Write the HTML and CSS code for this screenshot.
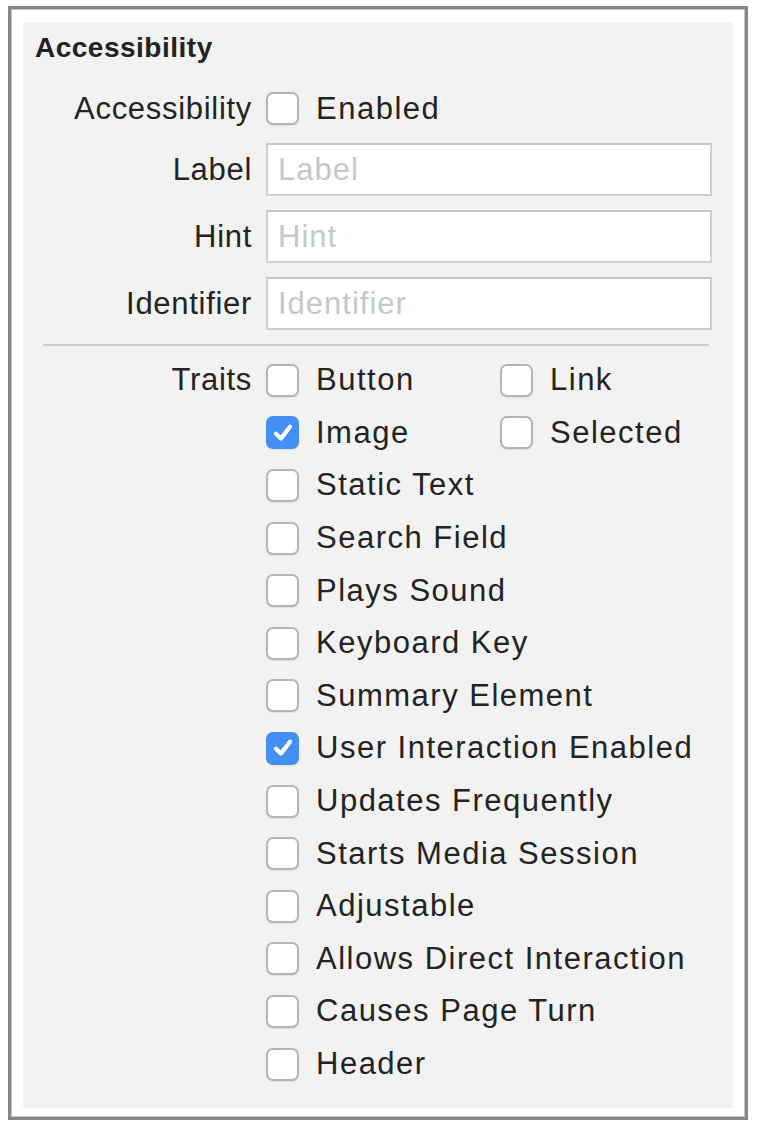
FILE: index.html
```html
<!DOCTYPE html>
<html>
<head>
<meta charset="utf-8">
<link rel="stylesheet" href="styles.css">
</head>
<body>
<div class="frame">
  <div class="panel">
    <h2 class="title">Accessibility</h2>
    <div class="form">
      <span class="lbl first">Accessibility</span>
      <label class="check first"><span class="box"></span><span class="txt">Enabled</span></label>
      <span class="lbl">Label</span>
      <div class="field">Label</div>
      <span class="lbl">Hint</span>
      <div class="field">Hint</div>
      <span class="lbl">Identifier</span>
      <div class="field">Identifier</div>
    </div>
    <div class="sep"></div>
    <div class="traits">
      <span class="lbl traits-lbl">Traits</span>
      <div class="trait-list">
        <label class="check"><span class="box"></span><span class="txt">Button</span></label>
        <label class="check"><span class="box"></span><span class="txt">Link</span></label>
        <label class="check"><span class="box on"><svg viewBox="0 0 20 20"><path d="M5 10.5 L8.5 14 L15 5.5" /></svg></span><span class="txt">Image</span></label>
        <label class="check"><span class="box"></span><span class="txt">Selected</span></label>
        <label class="check wide"><span class="box"></span><span class="txt">Static Text</span></label>
        <label class="check wide"><span class="box"></span><span class="txt">Search Field</span></label>
        <label class="check wide"><span class="box"></span><span class="txt">Plays Sound</span></label>
        <label class="check wide"><span class="box"></span><span class="txt">Keyboard Key</span></label>
        <label class="check wide"><span class="box"></span><span class="txt">Summary Element</span></label>
        <label class="check wide"><span class="box on"><svg viewBox="0 0 20 20"><path d="M5 10.5 L8.5 14 L15 5.5" /></svg></span><span class="txt">User Interaction Enabled</span></label>
        <label class="check wide"><span class="box"></span><span class="txt">Updates Frequently</span></label>
        <label class="check wide"><span class="box"></span><span class="txt">Starts Media Session</span></label>
        <label class="check wide"><span class="box"></span><span class="txt">Adjustable</span></label>
        <label class="check wide"><span class="box"></span><span class="txt">Allows Direct Interaction</span></label>
        <label class="check wide"><span class="box"></span><span class="txt">Causes Page Turn</span></label>
        <label class="check wide"><span class="box"></span><span class="txt">Header</span></label>
      </div>
    </div>
  </div>
</div>
</body>
</html>
```

FILE: styles.css
```css
html, body {
  margin: 0;
  padding: 0;
  background: #ffffff;
}
body {
  font-family: "Liberation Sans", Arial, sans-serif;
  color: #232323;
}
.frame {
  box-sizing: border-box;
  margin: 6px 0 0 8px;
  width: 740px;
  border: 3px solid #878787;
  box-shadow: inset 0 0 0 1px #c4c4c4;
  padding: 13px 12px 9px 12px;
  background: #ffffff;
}
.panel {
  background: #f2f2f2;
  height: 1086px;
  box-sizing: border-box;
  padding-top: 10px;
}
.title {
  margin: 0;
  padding-left: 12px;
  font-size: 28px;
  line-height: 32px;
  font-weight: bold;
  letter-spacing: 0.5px;
  color: #222;
}
.lbl {
  font-size: 31px;
  letter-spacing: 0.7px;
  text-align: right;
  white-space: nowrap;
}
.form {
  display: grid;
  grid-template-columns: 229px 446px;
  column-gap: 14px;
  grid-template-rows: 37px 53px 53px 53px;
  row-gap: 14px;
  margin-top: 28px;
  align-items: center;
}
.form > .first {
  align-self: start;
  height: 33px;
  line-height: 33px;
}
.field {
  box-sizing: border-box;
  height: 53px;
  background: #fff;
  border: 2px solid #d0d0d0;
  border-top-color: #c6c6c6;
  padding-left: 10px;
  font-size: 31px;
  letter-spacing: 1px;
  color: #c5c7cc;
  display: flex;
  align-items: center;
}
.sep {
  height: 2px;
  background: #cdcdcd;
  margin: 14px 24px 0 20px;
}
.traits {
  display: grid;
  grid-template-columns: 229px 1fr;
  column-gap: 14px;
  margin-top: 8px;
}
.traits-lbl {
  line-height: 52.6px;
}
.trait-list {
  display: grid;
  grid-template-columns: 234px 1fr;
  grid-auto-rows: 52.6px;
}
.check {
  display: flex;
  align-items: center;
  gap: 17px;
}
.check.wide { grid-column: 1 / 3; }
.txt {
  font-size: 31px;
  letter-spacing: 1.5px;
  white-space: nowrap;
}
.box {
  box-sizing: border-box;
  width: 33px;
  height: 33px;
  flex: none;
  border-radius: 7px;
  background: #ffffff;
  border: 2px solid #b5b5b5;
  box-shadow: 0 1px 1px rgba(0,0,0,0.08);
  display: flex;
  align-items: center;
  justify-content: center;
}
.box.on {
  background: #438ff3;
  border-color: #438ff3;
}
.box svg {
  width: 28px;
  height: 28px;
}
.box svg path {
  fill: none;
  stroke: #ffffff;
  stroke-width: 3;
  stroke-linecap: round;
  stroke-linejoin: round;
}
```
